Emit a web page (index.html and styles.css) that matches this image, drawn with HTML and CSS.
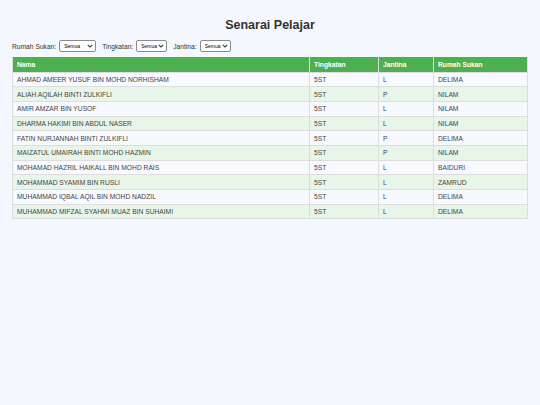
FILE: index.html
```html
<!DOCTYPE html>
<html lang="ms">
<head>
<meta charset="utf-8">
<title>Senarai Pelajar</title>
<link rel="stylesheet" href="styles.css">
</head>
<body>
<h1 class="title">Senarai Pelajar</h1>
<div class="filters">
  <label class="flabel">Rumah Sukan:
    <span class="selwrap sel-wide"><select class="sel"><option>Semua</option></select><svg class="chev" viewBox="0 0 8 5" width="6" height="4"><path d="M1 1 L4 4 L7 1" fill="none" stroke="#333" stroke-width="1.4"/></svg></span>
  </label>
  <label class="flabel">Tingkatan:
    <span class="selwrap"><select class="sel"><option>Semua</option></select><svg class="chev" viewBox="0 0 8 5" width="6" height="4"><path d="M1 1 L4 4 L7 1" fill="none" stroke="#333" stroke-width="1.4"/></svg></span>
  </label>
  <label class="flabel">Jantina:
    <span class="selwrap"><select class="sel"><option>Semua</option></select><svg class="chev" viewBox="0 0 8 5" width="6" height="4"><path d="M1 1 L4 4 L7 1" fill="none" stroke="#333" stroke-width="1.4"/></svg></span>
  </label>
</div>
<table class="tbl">
  <thead>
    <tr><th class="c-nama">Nama</th><th class="c-ting">Tingkatan</th><th class="c-jan">Jantina</th><th class="c-rumah">Rumah Sukan</th></tr>
  </thead>
  <tbody>
    <tr><td>AHMAD AMEER YUSUF BIN MOHD NORHISHAM</td><td>5ST</td><td>L</td><td>DELIMA</td></tr>
    <tr><td>ALIAH AQILAH BINTI ZULKIFLI</td><td>5ST</td><td>P</td><td>NILAM</td></tr>
    <tr><td>AMIR AMZAR BIN YUSOF</td><td>5ST</td><td>L</td><td>NILAM</td></tr>
    <tr><td>DHARMA HAKIMI BIN ABDUL NASER</td><td>5ST</td><td>L</td><td>NILAM</td></tr>
    <tr><td>FATIN NURJANNAH BINTI ZULKIFLI</td><td>5ST</td><td>P</td><td>DELIMA</td></tr>
    <tr><td>MAIZATUL UMAIRAH BINTI MOHD HAZMIN</td><td>5ST</td><td>P</td><td>NILAM</td></tr>
    <tr><td>MOHAMAD HAZRIL HAIKALL BIN MOHD RAIS</td><td>5ST</td><td>L</td><td>BAIDURI</td></tr>
    <tr><td>MOHAMMAD SYAMIM BIN RUSLI</td><td>5ST</td><td>L</td><td>ZAMRUD</td></tr>
    <tr><td>MUHAMMAD IQBAL AQIL BIN MOHD NADZIL</td><td>5ST</td><td>L</td><td>DELIMA</td></tr>
    <tr><td>MUHAMMAD MIFZAL SYAHMI MUAZ BIN SUHAIMI</td><td>5ST</td><td>L</td><td>DELIMA</td></tr>
  </tbody>
</table>
</body>
</html>
```

FILE: styles.css
```css
html, body {
  margin: 0;
  padding: 0;
}
body {
  background: #f4f7fd;
  font-family: "Liberation Sans", Arial, sans-serif;
  color: #333;
  padding: 12px;
}
.title {
  text-align: center;
  font-size: 12.5px;
  font-weight: bold;
  margin: 6px 0 7px;
  color: #333;
  line-height: 15px;
}
.filters {
  display: flex;
  align-items: center;
  gap: 6px;
  font-size: 6.7px;
  margin-bottom: 5px;
  height: 12px;
}
.flabel {
  display: flex;
  align-items: center;
  gap: 3px;
  color: #333;
}
.selwrap {
  position: relative;
  display: inline-block;
  width: 31px;
  height: 12px;
}
.sel-wide {
  width: 37px;
}
.sel {
  -webkit-appearance: none;
  appearance: none;
  font-family: "Liberation Sans", Arial, sans-serif;
  font-size: 5px;
  width: 100%;
  height: 12px;
  padding: 0 0 0 4px;
  margin: 0;
  border: 1px solid #8a8a8a;
  border-radius: 2px;
  background: #fff;
  color: #000;
  box-sizing: border-box;
  display: block;
}
.chev {
  position: absolute;
  right: 3px;
  top: 4px;
  pointer-events: none;
}
.tbl {
  width: 100%;
  border-collapse: collapse;
  font-size: 6.7px;
  background: #f8f9ff;
}
.tbl th {
  background: #4caf50;
  color: #fff;
  font-weight: bold;
  text-align: left;
  height: 15px;
  padding: 0 4px;
  border: 1px solid #ddd;
  border-top: none;
  box-sizing: border-box;
}
.tbl td {
  height: 14.7px;
  padding: 0 4px;
  border: 1px solid #ddd;
  box-sizing: border-box;
  color: #444;
}
.tbl tbody tr:nth-child(even) td {
  background: #e8f5e9;
}
.c-nama { width: 297px; }
.c-ting { width: 69px; }
.c-jan { width: 55px; }
```
